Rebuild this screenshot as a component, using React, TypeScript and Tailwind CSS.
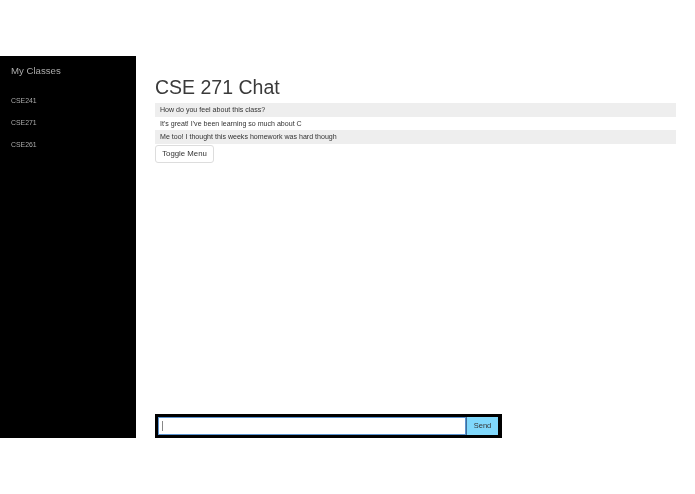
export default function App() {
  return (
    <div className="w-[695px] h-[494px] bg-white overflow-hidden font-['Liberation_Sans',Arial,sans-serif] text-[#333] pt-[56px] antialiased [will-change:transform]">
      <div className="flex h-[382px]">
        <aside className="w-[136px] shrink-0 bg-black text-[#aaa] pl-[11px] pt-[7px]">
          <div className="text-[9.65px] leading-[15px] h-[15px]">My Classes</div>
          <ul className="mt-[17px] flex flex-col gap-[11px] text-[6.9px]">
            <li className="h-[11px] leading-[11px]">CSE241</li>
            <li className="h-[11px] leading-[11px]">CSE271</li>
            <li className="h-[11px] leading-[11px]">CSE261</li>
          </ul>
        </aside>
        <main className="flex-1 pl-[19px] pr-[19px] flex flex-col">
          <h1 className="text-[19.5px] leading-[22px] mt-[20px] mb-[5px] font-normal text-[#3a3a3a]">CSE 271 Chat</h1>
          <div className="text-[7.07px] text-[#333]">
            <div className="h-[14px] leading-[14px] pl-[5px] bg-[#eeeeee]">How do you feel about this class?</div>
            <div className="h-[13px] leading-[13px] pl-[5px]">It's great! I've been learning so much about C</div>
            <div className="h-[14px] leading-[14px] pl-[5px] bg-[#eeeeee]">Me too! I thought this weeks homework was hard though</div>
          </div>
          <button className="mt-px w-[59px] h-[18px] border border-[#ddd] rounded-[3px] bg-white text-[7.8px] text-[#333] text-center leading-none">Toggle Menu</button>
          <div className="mt-auto w-[347px] h-[24px] bg-black p-[3px] pr-[4px] flex">
            <div className="flex-1 bg-white border border-[#5b93cf] flex items-center pl-[3px]">
              <div className="w-px h-[10px] bg-[#888]"></div>
            </div>
            <button className="w-[32px] h-full bg-[#80d8fc] text-[7.5px] text-[#333] text-center border-l border-[#3f6f9a]">Send</button>
          </div>
        </main>
      </div>
    </div>
  );
}
